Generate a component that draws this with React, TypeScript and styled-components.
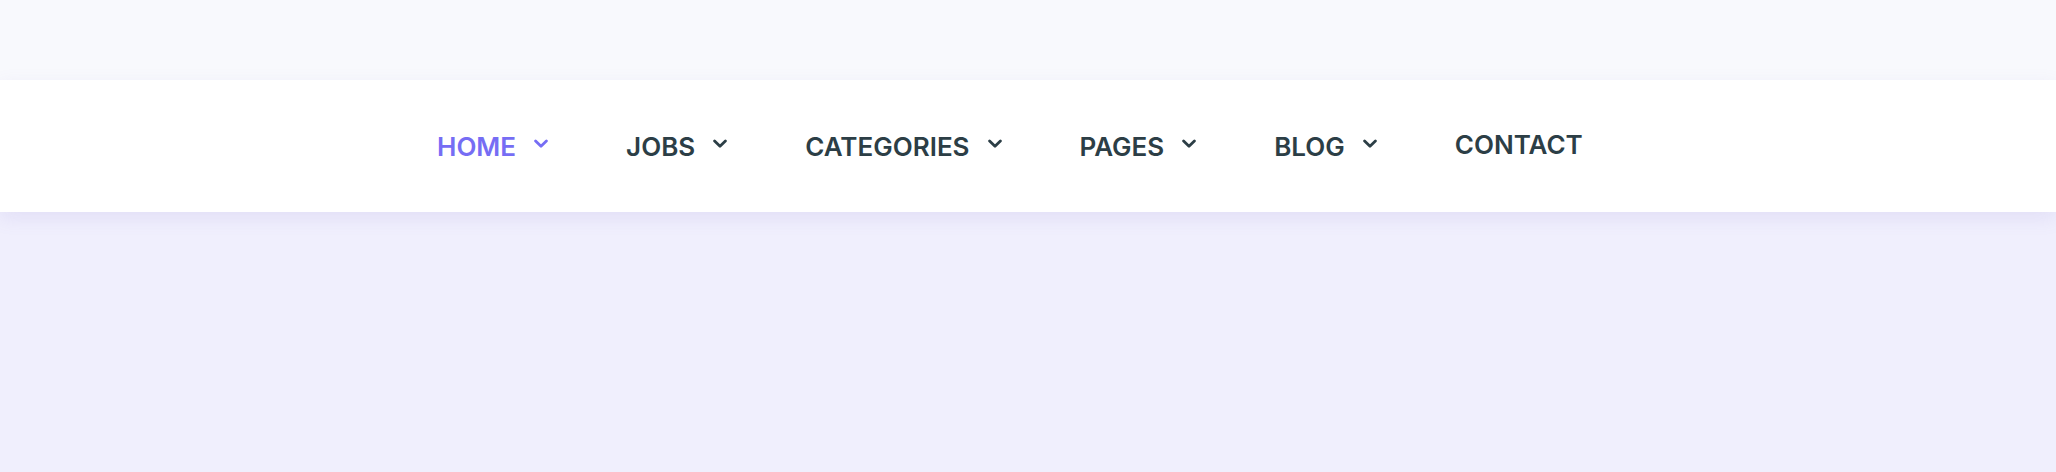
import React from 'react'
import styled, { createGlobalStyle } from 'styled-components'

const GlobalStyle = createGlobalStyle`
    html, body {
        margin: 0;
        padding: 0;
        background-color: #f0effd;
        font-family: 'Inter', 'Noto Sans', sans-serif;
    }
`

const Page = styled.div`
    min-height: 472px;
    background-color: #f0effd;
`

const TopStrip = styled.div`
    height: 80px;
    background-color: #f8f9fd;
`

const NavBar = styled.nav`
    position: relative;
    height: 132px;
    background-color: #ffffff;
    box-shadow: 0 6px 18px rgba(120, 110, 200, 0.12);
    display: flex;
    align-items: center;
    padding-left: 437px;
`

const NavList = styled.ul`
    display: flex;
    align-items: center;
    gap: 78px;
    margin: 0;
    padding: 0;
    list-style: none;
`

const NavItem = styled.li<{ $active?: boolean; $plain?: boolean }>`
    display: flex;
    align-items: center;
    gap: 18px;
    margin-top: ${(p) => (p.$plain ? '-3px' : '0')};
    font-size: 26px;
    font-weight: 600;
    text-transform: uppercase;
    color: ${(p) => (p.$active ? '#766df4' : '#2c3e46')};
    cursor: pointer;
`

const Caret = styled.svg`
    width: 14px;
    height: 10px;
    margin-top: -4px;
`

interface MenuEntry {
    label: string
    dropdown: boolean
}

const menu: MenuEntry[] = [
    { label: 'Home', dropdown: true },
    { label: 'Jobs', dropdown: true },
    { label: 'Categories', dropdown: true },
    { label: 'Pages', dropdown: true },
    { label: 'Blog', dropdown: true },
    { label: 'Contact', dropdown: false }
]

const App: React.FC = () => {
    return (
        <>
            <GlobalStyle />
            <Page>
                <TopStrip />
                <NavBar>
                    <NavList>
                        {menu.map((item, index) => (
                            <NavItem key={item.label} $active={index === 0} $plain={!item.dropdown}>
                                {item.label}
                                {item.dropdown && (
                                    <Caret viewBox="0 0 14 10" fill="none">
                                        <path
                                            d="M1.6 2 L7 7.2 L12.4 2"
                                            stroke="currentColor"
                                            strokeWidth="2.8"
                                            strokeLinecap="round"
                                            strokeLinejoin="round"
                                        />
                                    </Caret>
                                )}
                            </NavItem>
                        ))}
                    </NavList>
                </NavBar>
            </Page>
        </>
    )
}

export default App
